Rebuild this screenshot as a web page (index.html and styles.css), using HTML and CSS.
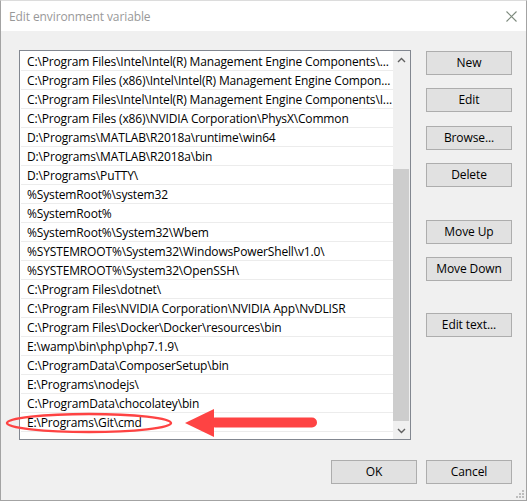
FILE: index.html
```html
<!DOCTYPE html>
<html>
<head>
<meta charset="utf-8">
<title>Edit environment variable</title>
<link rel="stylesheet" href="styles.css">
</head>
<body>
<div class="window">
  <div class="titlebar">
    <span class="title">Edit environment variable</span>
    <svg class="close" width="11" height="11" viewBox="0 0 11 11"><path d="M0.5 0.5 L10.5 10.5 M10.5 0.5 L0.5 10.5" stroke="#7d8a7d" stroke-width="1.1" fill="none"/></svg>
  </div>
  <div class="content">
    <div class="main">
      <div class="listbox">
        <div class="rows">
          <div class="row">C:\Program Files\Intel\Intel(R) Management Engine Components\...</div>
          <div class="row">C:\Program Files (x86)\Intel\Intel(R) Management Engine Compon...</div>
          <div class="row">C:\Program Files\Intel\Intel(R) Management Engine Components\I...</div>
          <div class="row">C:\Program Files (x86)\NVIDIA Corporation\PhysX\Common</div>
          <div class="row">D:\Programs\MATLAB\R2018a\runtime\win64</div>
          <div class="row">D:\Programs\MATLAB\R2018a\bin</div>
          <div class="row">D:\Programs\PuTTY\</div>
          <div class="row">%SystemRoot%\system32</div>
          <div class="row">%SystemRoot%</div>
          <div class="row">%SystemRoot%\System32\Wbem</div>
          <div class="row">%SYSTEMROOT%\System32\WindowsPowerShell\v1.0\</div>
          <div class="row">%SYSTEMROOT%\System32\OpenSSH\</div>
          <div class="row">C:\Program Files\dotnet\</div>
          <div class="row">C:\Program Files\NVIDIA Corporation\NVIDIA App\NvDLISR</div>
          <div class="row">C:\Program Files\Docker\Docker\resources\bin</div>
          <div class="row">E:\wamp\bin\php\php7.1.9\</div>
          <div class="row">C:\ProgramData\ComposerSetup\bin</div>
          <div class="row">E:\Programs\nodejs\</div>
          <div class="row">C:\ProgramData\chocolatey\bin</div>
          <div class="row">E:\Programs\Git\cmd</div>
        </div>
        <div class="scrollbar">
          <div class="arrow"><svg width="9" height="6" viewBox="0 0 9 6"><path d="M1 5 L4.5 1.5 L8 5" stroke="#606060" stroke-width="1.4" fill="none"/></svg></div>
          <div class="track">
            <div class="thumb"></div>
          </div>
          <div class="arrow"><svg width="9" height="6" viewBox="0 0 9 6"><path d="M1 1 L4.5 4.5 L8 1" stroke="#606060" stroke-width="1.4" fill="none"/></svg></div>
        </div>
      </div>
      <div class="buttons">
        <button class="btn b-new">New</button>
        <button class="btn b-edit">Edit</button>
        <button class="btn b-browse">Browse...</button>
        <button class="btn b-delete">Delete</button>
        <button class="btn b-up">Move Up</button>
        <button class="btn b-down">Move Down</button>
        <button class="btn b-text">Edit text...</button>
      </div>
    </div>
    <div class="footer">
      <button class="btn">OK</button>
      <button class="btn">Cancel</button>
    </div>
  </div>
  <svg class="annotation" width="330" height="50" viewBox="0 400 330 50">
    <ellipse cx="89" cy="423" rx="82" ry="9" fill="none" stroke="#fe4343" stroke-width="2.4"/>
    <polygon points="185,423 214,409 214,437" fill="#fe4343"/>
    <rect x="210" y="417.5" width="107" height="10" rx="5" fill="#fe4343"/>
  </svg>
  <svg class="grip" width="10" height="10" viewBox="0 0 10 10">
    <rect x="7" y="1" width="2" height="2" fill="#bdbdbd"/>
    <rect x="4" y="4" width="2" height="2" fill="#bdbdbd"/>
    <rect x="7" y="4" width="2" height="2" fill="#bdbdbd"/>
    <rect x="1" y="7" width="2" height="2" fill="#bdbdbd"/>
    <rect x="4" y="7" width="2" height="2" fill="#bdbdbd"/>
    <rect x="7" y="7" width="2" height="2" fill="#bdbdbd"/>
  </svg>
</div>
</body>
</html>
```

FILE: styles.css
```css
* { box-sizing: border-box; }
html, body { margin: 0; padding: 0; background: #ffffff; }
body {
  font-family: "Open Sans", "Noto Sans", "Liberation Sans", sans-serif;
  font-size: 12px;
  color: #000;
}
.window {
  position: relative;
  width: 527px;
  height: 501px;
  border: 1px solid #a3a3a3;
  border-top-color: #dcdcdc;
  background: #f0f0f0;
  display: flex;
  flex-direction: column;
}
.titlebar {
  height: 30px;
  background: #ffffff;
  display: flex;
  align-items: center;
  padding-left: 8px;
  padding-right: 9px;
}
.title {
  color: #999999;
  font-size: 12px;
  letter-spacing: -0.1px;
  padding-top: 1px;
}
.close {
  margin-left: auto;
  display: block;
}
.content {
  flex: 1;
  padding: 19px 14px 0 18px;
  display: flex;
  flex-direction: column;
}
.main {
  display: flex;
  gap: 15px;
}
.listbox {
  width: 392px;
  height: 390px;
  border: 1px solid #828790;
  background: #ffffff;
  display: flex;
}
.rows {
  flex: 1;
  padding: 1px 0 0 1px;
  overflow: hidden;
}
.row {
  height: 19px;
  line-height: 20px;
  border-bottom: 1px solid #ececec;
  padding-left: 6px;
  white-space: nowrap;
  overflow: hidden;
  letter-spacing: -0.15px;
}
.scrollbar {
  width: 17px;
  display: flex;
  flex-direction: column;
  background: #f0f0f0;
}
.arrow {
  height: 17px;
  display: flex;
  align-items: center;
  justify-content: center;
}
.arrow svg { display: block; }
.track {
  flex: 1;
  padding-top: 101px;
  padding-bottom: 1px;
  display: flex;
  flex-direction: column;
}
.thumb {
  flex: 1;
  background: #cdcdcd;
  margin: 0 1px 0 0;
}
.buttons {
  display: flex;
  flex-direction: column;
  width: 86px;
  padding-top: 1px;
}
.btn {
  width: 86px;
  height: 24px;
  background: #e1e1e1;
  border: 1px solid #adadad;
  font-family: "Open Sans", "Noto Sans", "Liberation Sans", sans-serif;
  font-size: 12px;
  letter-spacing: -0.1px;
  color: #000;
  padding: 0;
  margin: 0;
  line-height: 20px;
}
.b-edit { margin-top: 13px; }
.b-browse { margin-top: 14px; }
.b-delete { margin-top: 13px; }
.b-up { margin-top: 33px; }
.b-down { margin-top: 13px; }
.b-text { margin-top: 32px; }
.footer {
  margin-top: 20px;
  display: flex;
  justify-content: flex-end;
  gap: 9px;
}
.annotation {
  position: absolute;
  left: -1px;
  top: 399px;
}
.grip {
  position: absolute;
  right: 1px;
  bottom: 1px;
}
```
